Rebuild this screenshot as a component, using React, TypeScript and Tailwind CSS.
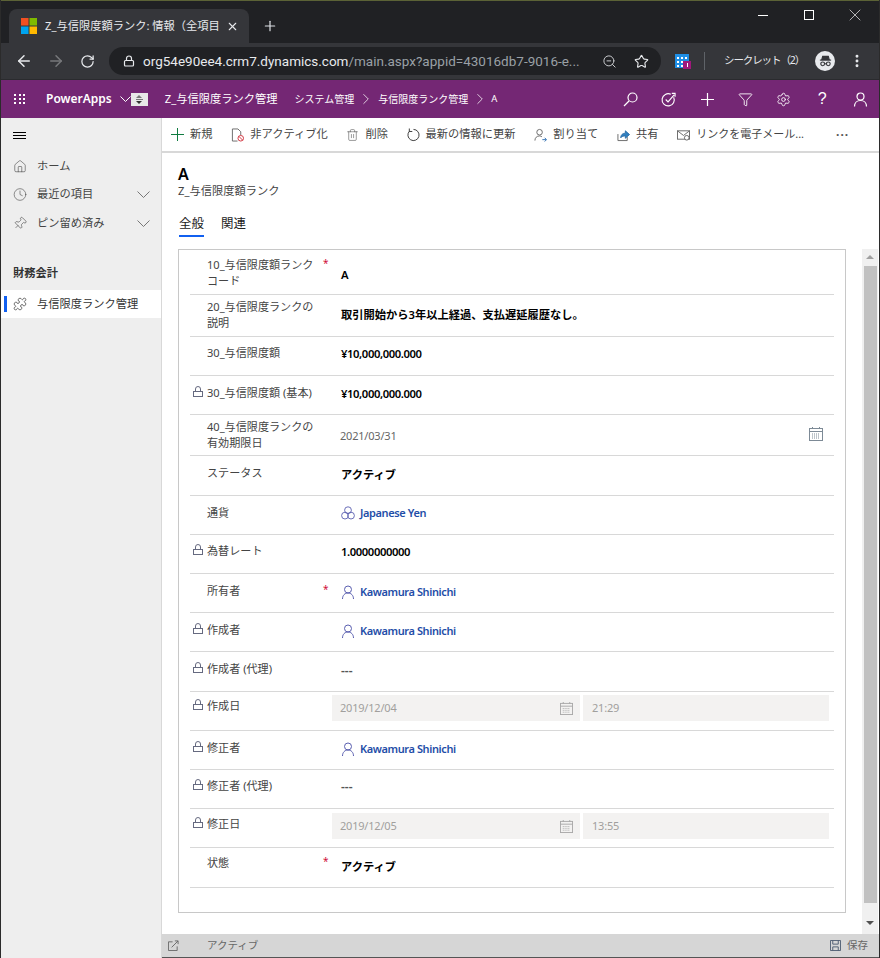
import {
  ArrowLeft,
  ArrowRight,
  ChevronRight,
  Clock,
  EllipsisVertical,
  Funnel,
  House,
  Lock,
  Pin,
  Plus,
  Puzzle,
  RotateCw,
  Settings,
  Star,
  Trash2,
  X,
  ZoomOut,
} from "lucide-react";

const FONT = "font-['Noto_Sans','Noto_Sans_CJK_JP',sans-serif]";

type Row = {
  label: string;
  label2?: string;
  height: string;
  labelPt: string;
  valuePt: string;
  locked?: boolean;
  required?: boolean;
  kind: "bold" | "number" | "date" | "currency" | "person" | "dash" | "disabled";
  value?: string;
  time?: string;
};

const rows: Row[] = [
  { label: "10_与信限度額ランク", label2: "コード", height: "h-[45px]", labelPt: "pt-[7px]", valuePt: "pt-[17px]", required: true, kind: "bold", value: "A" },
  { label: "20_与信限度ランクの", label2: "説明", height: "h-[42px]", labelPt: "pt-[4px]", valuePt: "pt-[12px]", kind: "bold", value: "取引開始から3年以上経過、支払遅延履歴なし。" },
  { label: "30_与信限度額", height: "h-[39px]", labelPt: "pt-[8px]", valuePt: "pt-[9px]", kind: "number", value: "¥10,000,000.000" },
  { label: "30_与信限度額 (基本)", height: "h-[39px]", labelPt: "pt-[9px]", valuePt: "pt-[10px]", locked: true, kind: "number", value: "¥10,000,000.000" },
  { label: "40_与信限度ランクの", label2: "有効期限日", height: "h-[41px]", labelPt: "pt-[4px]", valuePt: "pt-[13px]", kind: "date", value: "2021/03/31" },
  { label: "ステータス", height: "h-[40px]", labelPt: "pt-[9px]", valuePt: "pt-[11px]", kind: "bold", value: "アクティブ" },
  { label: "通貨", height: "h-[39px]", labelPt: "pt-[9px]", valuePt: "pt-[9px]", kind: "currency", value: "Japanese Yen" },
  { label: "為替レート", height: "h-[39px]", labelPt: "pt-[8px]", valuePt: "pt-[9px]", locked: true, kind: "number", value: "1.0000000000" },
  { label: "所有者", height: "h-[39px]", labelPt: "pt-[9px]", valuePt: "pt-[10px]", required: true, kind: "person", value: "Kawamura Shinichi" },
  { label: "作成者", height: "h-[39px]", labelPt: "pt-[9px]", valuePt: "pt-[10px]", locked: true, kind: "person", value: "Kawamura Shinichi" },
  { label: "作成者 (代理)", height: "h-[40px]", labelPt: "pt-[9px]", valuePt: "pt-[11px]", locked: true, kind: "dash", value: "---" },
  { label: "作成日", height: "h-[39px]", labelPt: "pt-[6px]", valuePt: "pt-[3px]", locked: true, kind: "disabled", value: "2019/12/04", time: "21:29" },
  { label: "修正者", height: "h-[39px]", labelPt: "pt-[9px]", valuePt: "pt-[10px]", locked: true, kind: "person", value: "Kawamura Shinichi" },
  { label: "修正者 (代理)", height: "h-[39px]", labelPt: "pt-[8px]", valuePt: "pt-[9px]", locked: true, kind: "dash", value: "---" },
  { label: "修正日", height: "h-[39px]", labelPt: "pt-[7px]", valuePt: "pt-[4px]", locked: true, kind: "disabled", value: "2019/12/05", time: "13:55" },
  { label: "状態", height: "h-[40px]", labelPt: "pt-[7px]", valuePt: "pt-[11px]", required: true, kind: "bold", value: "アクティブ" },
];

function CalendarIcon({ className }: { className?: string }) {
  return (
    <svg viewBox="0 0 14 14" className={className} fill="none" stroke="currentColor" strokeWidth="1">
      <rect x="0.5" y="1.5" width="13" height="12" />
      <path d="M0.5 4.5h13M3.5 0v2M10.5 0v2" />
      <path d="M3 7h8M3 9h8M3 11h8" strokeDasharray="1 1" />
    </svg>
  );
}

function LockIcon() {
  return (
    <svg viewBox="0 0 10 11" className="w-[10px] h-[11px]" fill="none" stroke="#666a80" strokeWidth="1">
      <path d="M2.5 5.5V3a2.5 2.5 0 0 1 5 0v2.5" />
      <rect x="0.5" y="5.5" width="9" height="5" />
    </svg>
  );
}

function CurrencyIcon() {
  return (
    <svg viewBox="0 0 14 14" className="w-[14px] h-[14px] text-[#5a5fb0]" fill="none" stroke="currentColor" strokeWidth="0.9">
      <circle cx="7" cy="4.2" r="3.4" />
      <circle cx="4" cy="9.6" r="3.4" />
      <circle cx="10" cy="9.6" r="3.4" />
    </svg>
  );
}

function PersonIcon() {
  return (
    <svg viewBox="0 0 14 14" className="w-[14px] h-[14px] text-[#5a5fb0]" fill="none" stroke="currentColor" strokeWidth="1">
      <circle cx="7" cy="4.5" r="3.5" />
      <path d="M1.5 14c0-3.5 2.2-6 5.5-6s5.500 2.500 5.500 6" />
    </svg>
  );
}

function FormValue({ row }: { row: Row }) {
  if (row.kind === "disabled") {
    return (
      <div className={`flex gap-[3px] ${row.valuePt}`}>
        <div className="flex h-[26px] w-[248px] items-center justify-between bg-[#f3f2f1] pl-[8px] pr-[7px] text-[11px] tracking-[-0.2px] text-[#a19f9d]">
          <span>{row.value}</span>
          <CalendarIcon className="w-[13px] h-[13px] text-[#a8a8a8]" />
        </div>
        <div className="flex h-[26px] w-[246px] items-center bg-[#f3f2f1] pl-[9px] text-[11px] tracking-[-0.2px] text-[#a19f9d]">
          {row.time}
        </div>
      </div>
    );
  }
  if (row.kind === "date") {
    return (
      <div className={`flex items-start justify-between pl-[8px] pr-[11px] ${row.valuePt}`}>
        <span className="text-[11px] leading-4 tracking-[-0.2px] text-[#666]">{row.value}</span>
        <CalendarIcon className="mt-[-1px] w-[14px] h-[14px] text-[#7d8a96]" />
      </div>
    );
  }
  if (row.kind === "currency" || row.kind === "person") {
    return (
      <div className={`flex items-center gap-[5px] pl-[9px] ${row.valuePt}`}>
        {row.kind === "currency" ? <CurrencyIcon /> : <PersonIcon />}
        <span className="text-[11px] font-semibold leading-4 tracking-[-0.4px] text-[#1f4ea8]">{row.value}</span>
      </div>
    );
  }
  if (row.kind === "dash") {
    return <div className={`pl-[9px] text-[12px] font-semibold leading-4 text-[#555] ${row.valuePt}`}>{row.value}</div>;
  }
  if (row.kind === "number") {
    return (
      <div className={`pl-[9px] text-[11.25px] font-semibold leading-4 tracking-[-0.4px] text-black ${row.valuePt}`}>
        {row.value}
      </div>
    );
  }
  return <div className={`pl-[9px] text-[11.25px] font-semibold leading-4 text-black ${row.valuePt}`}>{row.value}</div>;
}

function FormRow({ row }: { row: Row }) {
  return (
    <div className={`flex border-b border-[#d8d8d8] ${row.height}`}>
      <div className={`flex w-[142px] shrink-0 ${row.labelPt}`}>
        <div className="w-[17px] shrink-0 pl-[3px] pt-[1px]">{row.locked && <LockIcon />}</div>
        <div className="w-[116px] text-[11.1px] leading-4 text-[#444]">
          <div className="whitespace-nowrap">{row.label}</div>
          {row.label2 && <div>{row.label2}</div>}
        </div>
        {row.required && <span className="text-[10px] leading-3 text-[#d0103a]">*</span>}
      </div>
      <div className="min-w-0 flex-1">
        <FormValue row={row} />
      </div>
    </div>
  );
}

function Command({ icon, label }: { icon: React.ReactNode; label: string }) {
  return (
    <div className="flex items-center gap-[6px]">
      <span className="flex w-[13px] justify-center">{icon}</span>
      <span className="whitespace-nowrap text-[11.25px] text-[#444]">{label}</span>
    </div>
  );
}

function BrowserChrome() {
  return (
    <>
      <div className="h-[1px] bg-[#5b6236]" />
      <div className="flex h-[42px] items-end bg-[#202124] pl-[8px]">
        <div className="flex h-[34px] w-[240px] items-center rounded-t-[8px] bg-[#35363a] pl-[12px]">
          <svg viewBox="0 0 16 16" className="w-[16px] h-[16px] shrink-0">
            <rect width="7.5" height="7.5" fill="#f25022" />
            <rect x="8.5" width="7.5" height="7.5" fill="#7fba00" />
            <rect y="8.5" width="7.5" height="7.5" fill="#00a4ef" />
            <rect x="8.5" y="8.5" width="7.5" height="7.5" fill="#ffb900" />
          </svg>
          <span className="ml-[8px] w-[176px] whitespace-nowrap text-[11.25px] text-[#e8eaed]">
            Z_与信限度額ランク: 情報（全項目
          </span>
          <X size={13} strokeWidth={2} className="ml-[5px] shrink-0 text-[#e8eaed]" />
        </div>
        <Plus size={16} strokeWidth={1.8} className="mb-[9px] ml-[13px] text-[#dee1e6]" />
        <div className="mb-[18px] ml-auto flex items-center text-white">
          <div className="mr-[36px] h-[1px] w-[10px] bg-white" />
          <div className="mr-[31px] h-[10px] w-[10px] border border-white" />
          <X size={20} strokeWidth={0.8} className="mr-[14px]" />
        </div>
      </div>
      <div className="flex h-[37px] items-center border-b border-[#2a2b2e] bg-[#35363a] pl-[14px]">
        <ArrowLeft size={18} strokeWidth={2} className="text-[#e8eaed]" />
        <ArrowRight size={18} strokeWidth={2} className="ml-[14px] text-[#77787b]" />
        <RotateCw size={15} strokeWidth={2} className="ml-[15px] text-[#e8eaed]" />
        <div className="ml-[14px] flex h-[28px] w-[552px] items-center rounded-full bg-[#202124] pl-[14px] pr-[10px]">
          <Lock size={12} strokeWidth={2.4} className="text-[#e8eaed]" />
          <span className="ml-[8px] w-[447px] whitespace-nowrap font-['Roboto',sans-serif] text-[13.5px] text-[#e8eaed]">
            org54e90ee4.crm7.dynamics.com<span className="text-[#9aa0a6]">/main.aspx?appid=43016db7-9016-e...</span>
          </span>
          <ZoomOut size={15} strokeWidth={1.6} className="ml-[12px] text-[#c8cacd]" />
          <Star size={15} strokeWidth={1.8} className="ml-[17px] text-[#e8eaed]" />
        </div>
        <div className="relative ml-[14px] h-[14px] w-[14px]">
          <svg viewBox="0 0 14 14" className="w-[14px] h-[14px]">
            <rect width="14" height="14" fill="#1f8fe6" />
            <path d="M2 3h2v2H2zM6 3h2v2H6zM10 3h2v2h-2zM2 7h2v2H2zM6 7h2v2H6zM10 7h2v2h-2zM2 11h2v2H2zM6 11h2v2H6z" fill="#fff" />
          </svg>
          <span className="absolute left-[8px] top-[7px] flex h-[8px] w-[8px] items-center justify-center bg-[#a0187c]">
            <span className="h-[4px] w-[1px] bg-white" />
          </span>
        </div>
        <div className="ml-[15px] h-[18px] w-[1px] bg-[#5f6368]" />
        <span className="ml-[19px] whitespace-nowrap text-[10.5px] tracking-[-1.1px] text-[#e8eaed]">シークレット（2）</span>
        <div className="ml-[11px] flex h-[20px] w-[20px] items-center justify-center rounded-full bg-[#e8eaed]">
          <svg viewBox="0 0 16 16" className="w-[15px] h-[15px]" fill="none" stroke="#35363a" strokeWidth="1.2">
            <path d="M4 6l1-3.5h6L12 6z" fill="#35363a" />
            <path d="M2 6.5h12" />
            <circle cx="5" cy="10.5" r="2" />
            <circle cx="11" cy="10.5" r="2" />
            <path d="M7 10.5h2" />
          </svg>
        </div>
        <EllipsisVertical size={16} strokeWidth={2.4} className="ml-[14px] text-[#e8eaed]" />
      </div>
    </>
  );
}

function AppHeader() {
  const dots = Array.from({ length: 9 });
  return (
    <div className="flex h-[38px] items-center bg-[#742774] pl-[13px] text-white">
      <div className="grid w-[12px] grid-cols-3 gap-[2px]">
        {dots.map((_, i) => (
          <span key={i} className="h-[2px] w-[2px] bg-white" />
        ))}
      </div>
      <span className="ml-[20px] text-[12px] font-semibold">PowerApps</span>
      <svg viewBox="0 0 11 6" className="ml-[8px] w-[11px] h-[6px]" fill="none" stroke="currentColor" strokeWidth="1">
        <path d="M.5.5l5 5 5-5" />
      </svg>
      <span className="flex h-[13px] w-[17px] flex-col items-center justify-center gap-[1px] bg-[#e8e8e8]">
        <span className="h-0 w-0 border-x-[3px] border-b-[3px] border-x-transparent border-b-[#777]" />
        <span className="h-[1px] w-[7px] bg-[#777]" />
        <span className="h-0 w-0 border-x-[3px] border-t-[3px] border-x-transparent border-t-[#333]" />
      </span>
      <span className="ml-[17px] whitespace-nowrap text-[11.25px]">Z_与信限度ランク管理</span>
      <span className="ml-[17px] whitespace-nowrap text-[10px]">システム管理</span>
      <ChevronRight size={18} strokeWidth={1} className="ml-[3px]" />
      <span className="ml-[3px] whitespace-nowrap text-[10px]">与信限度ランク管理</span>
      <ChevronRight size={18} strokeWidth={1} className="ml-[3px]" />
      <span className="ml-[2px] text-[9.5px]">A</span>
      <div className="ml-auto mr-[11px] flex items-center gap-[23.33px]">
        <svg viewBox="0 0 15 15" className="w-[15px] h-[15px]" fill="none" stroke="currentColor" strokeWidth="1.2">
          <circle cx="9.5" cy="5.5" r="4.5" />
          <path d="M6 9l-5 5" />
        </svg>
        <svg viewBox="0 0 16 16" className="w-[15px] h-[15px]" fill="none" stroke="currentColor" strokeWidth="1.2">
          <path d="M13.5 5.5A6.5 6.5 0 1 1 10.5 2.5" />
          <path d="M5 8l2.5 2.5L14 3M11.5 1.5H15V5" />
        </svg>
        <svg viewBox="0 0 15 15" className="w-[15px] h-[15px]" fill="none" stroke="currentColor" strokeWidth="1.2">
          <path d="M7.5 1v13M1 7.5h13" />
        </svg>
        <Funnel size={15} strokeWidth={1.4} />
        <Settings size={15} strokeWidth={1.4} />
        <span className="flex w-[15px] justify-center font-['Liberation_Sans',sans-serif] text-[16px] font-normal leading-none">?</span>
        <svg viewBox="0 0 15 15" className="w-[15px] h-[15px]" fill="none" stroke="currentColor" strokeWidth="1.2">
          <circle cx="7.5" cy="4.5" r="3.5" />
          <path d="M1.5 14.5c0-3.5 2.5-6 6-6s6 2.5 6 6" />
        </svg>
      </div>
    </div>
  );
}

function NavChevron() {
  return (
    <svg viewBox="0 0 13 7" className="ml-auto w-[13px] h-[7px]" fill="none" stroke="#777" strokeWidth="1">
      <path d="M.5.5l6 6 6-6" />
    </svg>
  );
}

function NavItem({ icon, label, chevron }: { icon: React.ReactNode; label: string; chevron?: boolean }) {
  return (
    <div className="flex h-[28.5px] items-center pl-[12px] pr-[11px]">
      <span className="flex w-[14px] justify-center text-[#444]">{icon}</span>
      <span className="ml-[10px] whitespace-nowrap text-[11.25px] text-[#444]">{label}</span>
      {chevron && <NavChevron />}
    </div>
  );
}

function Sidebar() {
  return (
    <div className="flex w-[161px] shrink-0 flex-col border-r border-[#d8d8d8] bg-[#eeeeee]">
      <div className="flex h-[34px] items-center pl-[12px]">
        <div className="flex w-[13px] flex-col gap-[2px]">
          <span className="h-[1px] bg-black" />
          <span className="h-[1px] bg-black" />
          <span className="h-[1px] bg-black" />
        </div>
      </div>
      <NavItem icon={<House size={15} strokeWidth={1} />} label="ホーム" />
      <NavItem icon={<Clock size={15} strokeWidth={1} />} label="最近の項目" chevron />
      <NavItem icon={<Pin size={15} strokeWidth={1} className="rotate-45" />} label="ピン留め済み" chevron />
      <div className="mt-[27.5px] pl-[12px] text-[11.25px] font-semibold leading-4 text-[#333]">財務会計</div>
      <div className="mt-[9px] flex h-[28px] items-center bg-white pl-[3px]">
        <span className="h-[16px] w-[3px] bg-[#1160f0]" />
        <Puzzle size={14} strokeWidth={1.2} className="ml-[6px] text-[#333]" />
        <span className="ml-[10px] whitespace-nowrap text-[11.25px] text-[#333]">与信限度ランク管理</span>
      </div>
    </div>
  );
}

function CommandBar() {
  return (
    <div className="flex h-[35px] shrink-0 items-center border-b-2 border-[#d8d8d8] bg-white pl-[9px]">
      <div className="flex items-center gap-[18.7px]">
        <Command
          icon={
            <svg viewBox="0 0 13 13" className="w-[13px] h-[13px]" fill="none" stroke="#107c41" strokeWidth="1">
              <path d="M6.5 0v13M0 6.5h13" />
            </svg>
          }
          label="新規"
        />
        <Command
          icon={
            <svg viewBox="0 0 14 14" className="w-[14px] h-[14px]" fill="none" stroke="#666" strokeWidth="1">
              <path d="M7 13.5H1.5V.5h6l3 3V7" />
              <circle cx="10.5" cy="10.5" r="3" stroke="#d0303a" fill="#fff" />
              <path d="M8.500 8.500l4 4" stroke="#d0303a" />
            </svg>
          }
          label="非アクティブ化"
        />
        <Command icon={<Trash2 size={16} strokeWidth={1} className="text-[#444]" />} label="削除" />
        <Command
          icon={
            <svg viewBox="0 0 14 14" className="w-[14px] h-[14px]" fill="none" stroke="#333" strokeWidth="1">
              <path d="M7 1a6 6 0 1 1-4.300 1.800" />
              <path d="M2.500 0v3.200h3.200" />
            </svg>
          }
          label="最新の情報に更新"
        />
        <Command
          icon={
            <svg viewBox="0 0 14 14" className="w-[14px] h-[14px]" fill="none" stroke="#666" strokeWidth="1">
              <circle cx="6" cy="4" r="3" />
              <path d="M1 13c0-3 2-5 5-5 1 0 2 .3 2.500 1" />
              <path d="M9 12h4M11.500 10l2 2-2 2" stroke="#2b6cb0" />
            </svg>
          }
          label="割り当て"
        />
        <Command
          icon={
            <svg viewBox="0 0 14 14" className="w-[14px] h-[14px]" fill="none" stroke="#2f6fa8" strokeWidth="1">
              <path d="M1 6v7h10V9" stroke="#666" />
              <path d="M4 10c0-3 2-5 5-5V2.500l4.500 4-4.500 4V8c-2 0-4 .5-5 2z" fill="#2f7fc0" />
            </svg>
          }
          label="共有"
        />
        <div className="flex items-center gap-[6px]">
          <span className="flex w-[13px] justify-center">
            <svg viewBox="0 0 14 14" className="w-[14px] h-[14px]" fill="none" stroke="#666" strokeWidth="1">
              <rect x="0.5" y="2.5" width="13" height="9" />
              <path d="M.5 2.500l6.500 5 6.500-5" />
              <circle cx="10.5" cy="10" r="2.500" fill="#fff" />
            </svg>
          </span>
          <span className="whitespace-nowrap text-[11px] text-[#444]">リンクを電子メール...</span>
        </div>
      </div>
      <span className="ml-[32px] text-[12px] font-bold leading-none tracking-[1px] text-[#555]">···</span>
    </div>
  );
}

function Scrollbar() {
  return (
    <div className="mt-[96px] flex w-[16px] shrink-0 flex-col items-center bg-[#f0f0f0]">
      <span className="mt-[6px] h-0 w-0 border-x-[4px] border-b-[4px] border-x-transparent border-b-[#a0a0a0]" />
      <span className="ml-[1px] mt-[7px] h-[637px] w-[13px] bg-[#c1c1c1]" />
      <span className="mt-[18px] h-0 w-0 border-x-[4px] border-t-[4px] border-x-transparent border-t-[#505050]" />
    </div>
  );
}

export default function App() {
  return (
    <div className={`flex h-[958px] w-[880px] flex-col overflow-hidden border-x border-[#2b2b2b] bg-white ${FONT}`}>
      <BrowserChrome />
      <AppHeader />
      <div className="flex min-h-0 flex-1">
        <Sidebar />
        <div className="flex min-w-0 flex-1 flex-col">
          <CommandBar />
          <div className="flex min-h-0 flex-1 pr-[1px]">
            <div className="min-w-0 flex-1 pl-[16px] pr-[16px]">
              <div className="mt-[12px] text-[16px] font-semibold leading-[18px] text-black">A</div>
              <div className="text-[11.25px] leading-4 text-[#444]">Z_与信限度額ランク</div>
              <div className="ml-[1px] mt-[15px] flex gap-[17px] text-[12.5px] leading-5 text-[#222]">
                <div className="border-b-2 border-[#1160f0] pb-[1px]">全般</div>
                <div>関連</div>
              </div>
              <div className="mt-[12px] h-[664px] border border-[#c8c8c8] px-[11px]">
                {rows.map((row) => (
                  <FormRow key={row.label} row={row} />
                ))}
              </div>
            </div>
            <Scrollbar />
          </div>
          <div className="flex h-[24px] shrink-0 items-center border-b border-[#555] bg-[#d6d6d6] pl-[6px] pr-[11px]">
            <svg viewBox="0 0 12 12" className="w-[11px] h-[11px]" fill="none" stroke="#666" strokeWidth="1">
              <path d="M5 2H.5v9.500H10V7M4 8l7-7M7.500 1H11v3.500" />
            </svg>
            <span className="ml-[28px] text-[10.5px] text-[#666]">アクティブ</span>
            <svg viewBox="0 0 12 12" className="ml-auto w-[11px] h-[11px]" fill="none" stroke="#4a5a70" strokeWidth="1">
              <path d="M.5.5h11v11H.5zM3 .5v4h6v-4M3 11.5v-4h6v4" />
            </svg>
            <span className="ml-[6px] text-[10.5px] text-[#666]">保存</span>
          </div>
        </div>
      </div>
    </div>
  );
}
